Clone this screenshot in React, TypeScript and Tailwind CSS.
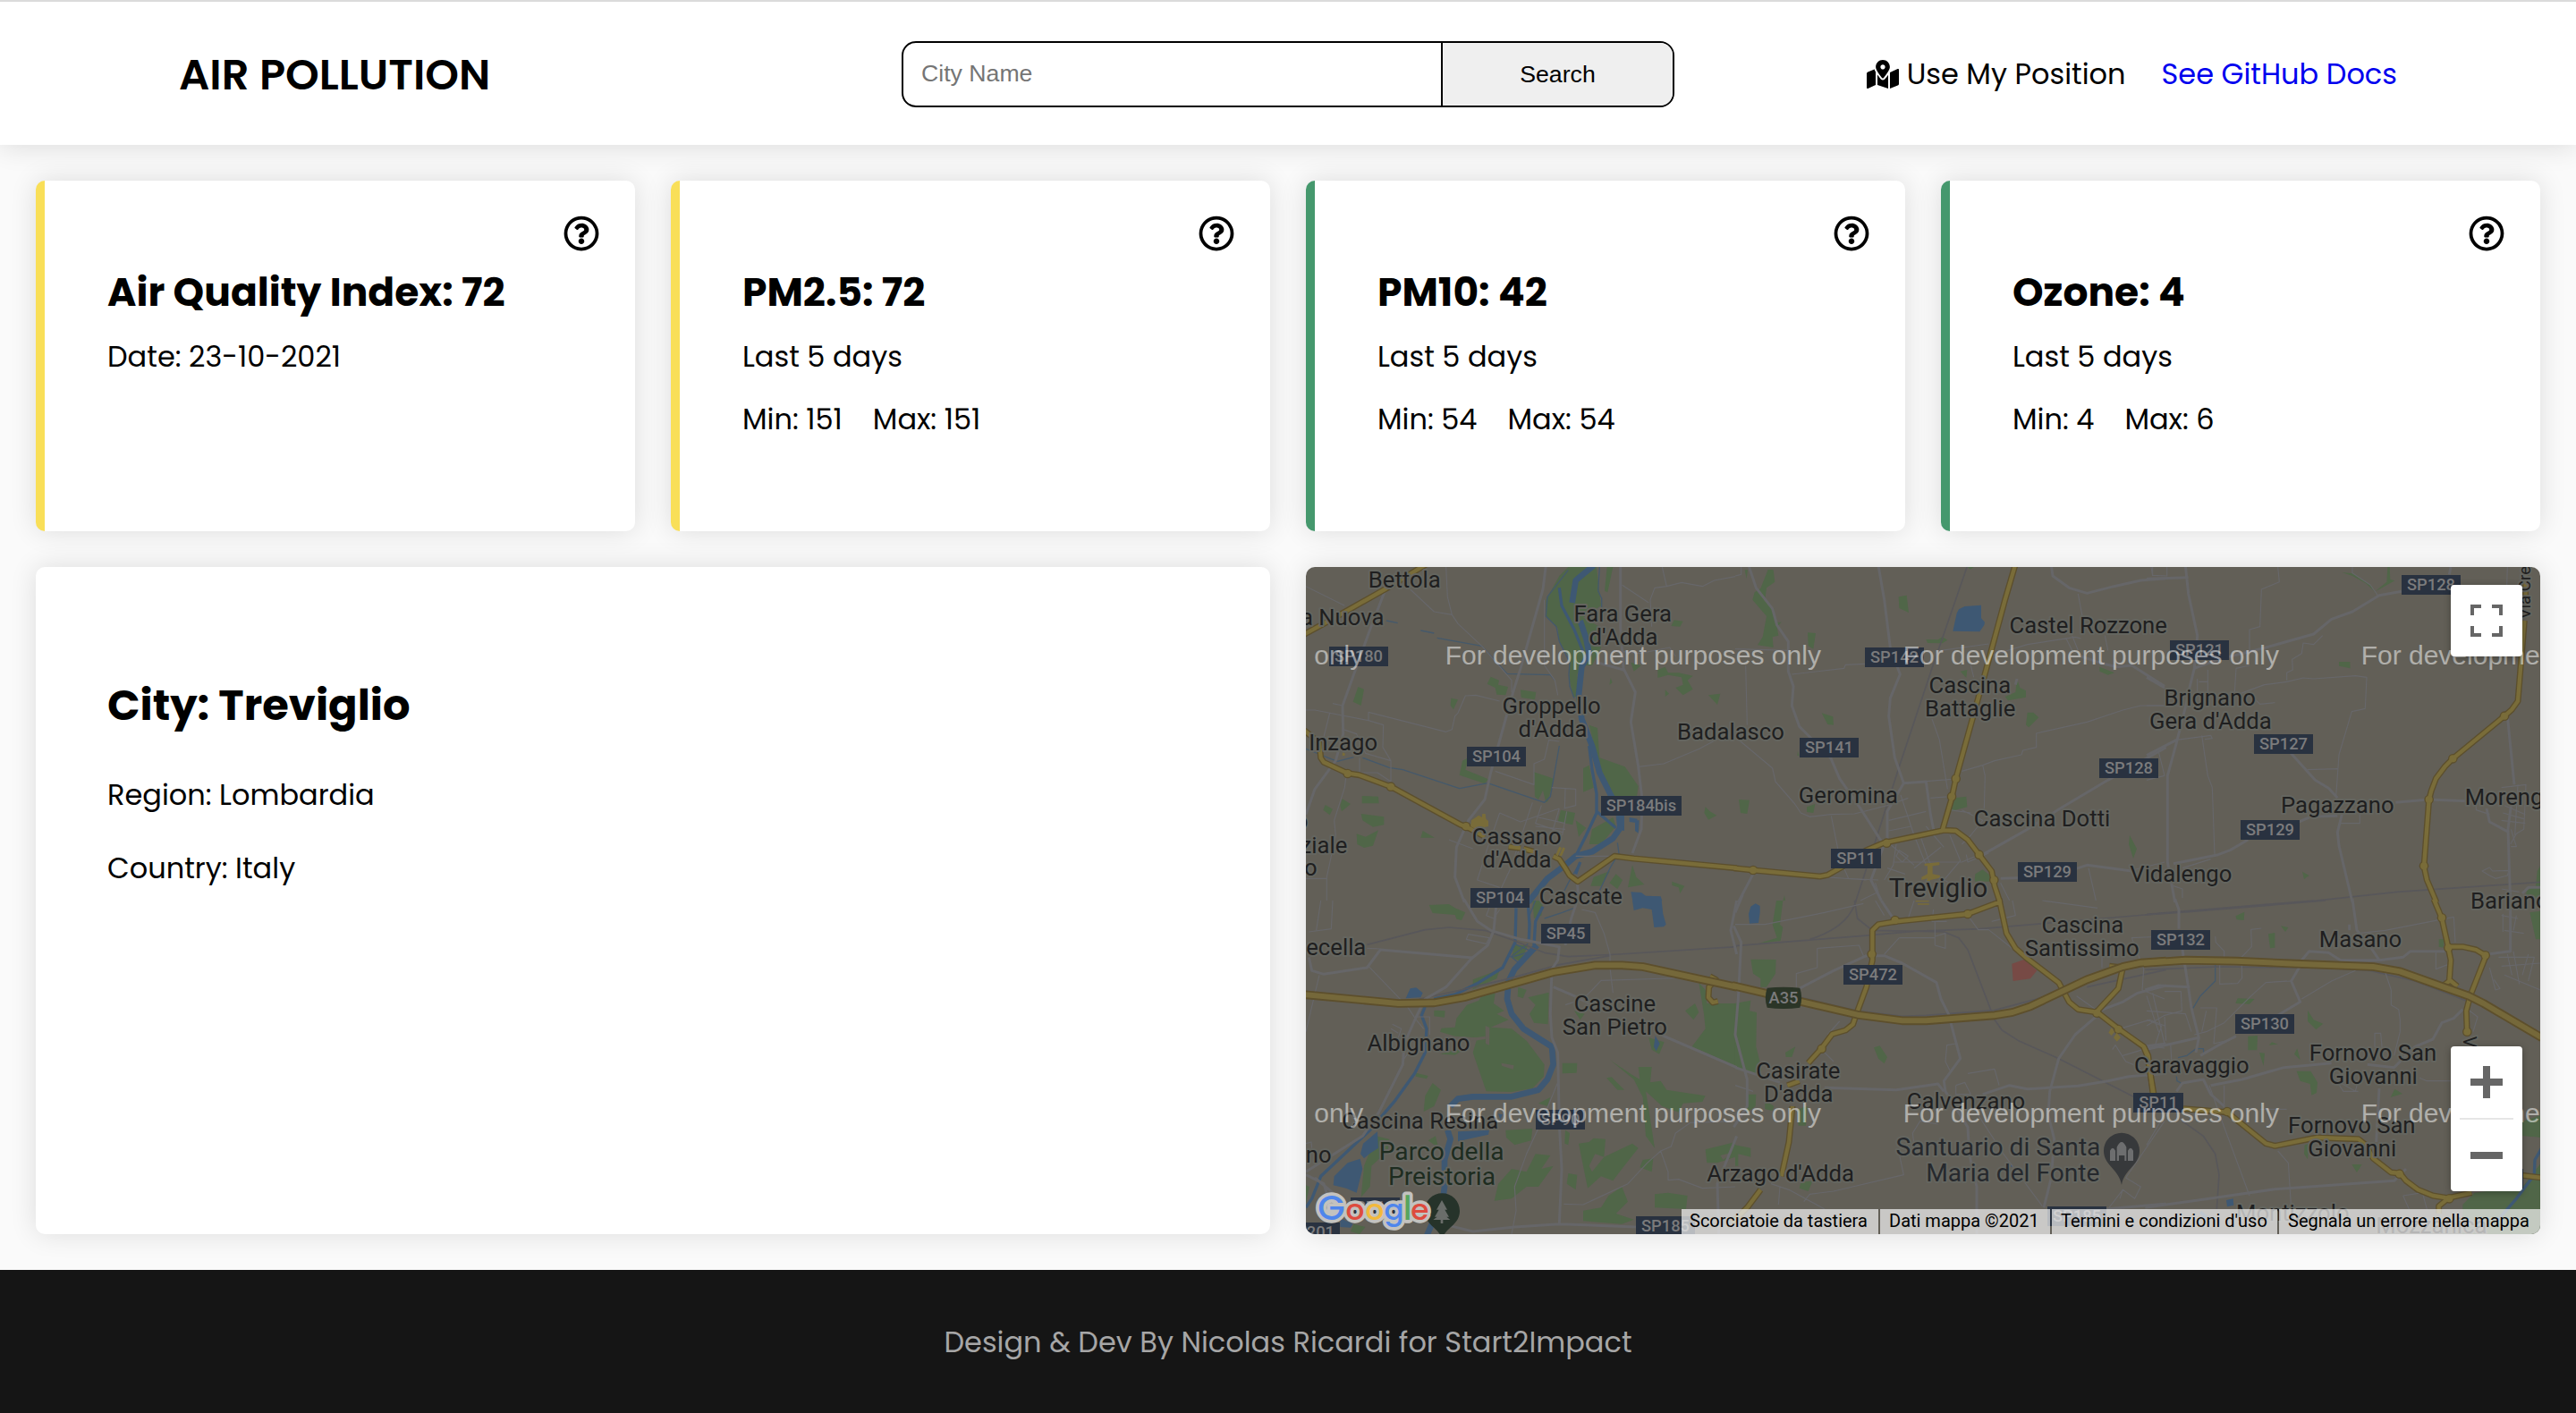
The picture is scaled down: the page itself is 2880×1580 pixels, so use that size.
import { FaRegQuestionCircle, FaMapMarkedAlt } from 'react-icons/fa';

/* ------------------------------------------------------------------ */
/* Map data: six tiles, each in its own local coordinates              */
/* ------------------------------------------------------------------ */

type Tile = {
  x: number;
  y: number;
  green: string;
  ground?: string;
  water: string;
  river?: string;
  stream: string;
  brook?: string;
  rail: string;
  street: string;
  road: string;
  primary: string;
  motorway?: string;
  amber?: string;
  nodes?: [number, number][];
};

const tiles: Tile[] = [
  {
    x: 0,
    y: 0,
    green:
      'M850,30L805,110L805,165L845,205L850,250L875,290L882,300L885,380L895,435L915,435L910,360L930,330L960,330L990,270L985,200L930,170L990,130L975,0L880,0ZM1010,0L1030,0L1012,85L1002,80ZM175,402L195,410L185,465L158,452ZM487,440L510,445L495,478L485,465ZM620,368L648,380L645,395L678,402L670,430L640,428L635,405L608,392ZM720,412L772,420L768,445L722,438ZM545,640L535,680L612,712L600,727L515,698L525,650ZM765,688L832,710L812,785L805,790L795,750L780,780L768,770ZM930,675L950,665L965,740L930,755ZM950,530L978,540L985,640L1070,670L1115,735L1110,770L1030,770L990,690ZM855,815L903,825L895,865L845,855ZM905,850L940,875L915,905ZM960,880L1030,840L1040,870L990,930L950,930ZM1095,1000L1108,1040L1135,1065L1080,1075ZM1040,1030L1062,1050L1045,1080L1018,1060ZM965,1040L1020,1020L990,1070L955,1070ZM1228,1055L1270,1070L1255,1095L1250,1075L1228,1068ZM1340,805L1355,820L1378,833L1350,848L1336,825ZM1205,335L1215,355L1250,355L1298,365L1280,380L1298,410L1265,430L1240,405L1265,395L1260,370L1215,362L1180,372L1180,345ZM1350,430L1390,425L1380,462ZM1235,178L1265,182L1255,200L1225,198ZM1090,320L1125,330L1100,350ZM188,768L243,770L245,793L188,793ZM185,828L262,838L262,865L225,872L190,850ZM170,895L200,905L243,883L225,935L195,942L172,930ZM392,885L432,908L385,908ZM122,778L150,795L120,820L115,800ZM65,798L90,812L80,832L58,815ZM1022,372L1028,388L1018,395ZM1205,412L1218,425L1205,435Z',
    water: 'M1085,840L1112,845L1108,858L1085,855ZM1104,850L1118,850L1115,893L1104,885ZM1090,1090L1125,1092L1140,1103L1190,1105L1195,1120L1096,1120ZM1040,835L1068,835L1068,885L1045,880Z',
    river: 'M965,-5L905,45L893,120M920,180L940,240L950,290L925,335L915,430L925,510L960,600L985,690L1020,760L1058,830L1058,870L1030,910L960,955L905,970L870,1000L810,1045L745,1125',
    stream: 'M850,70L858,130L900,210L930,285M950,600L960,680L975,760L975,825L940,900L905,970M975,820L1040,875M920,990L905,1030',
    brook:
      'M880,10L810,100L805,165L840,200L850,250L885,320L882,360L885,400L900,440M985,0L980,80L992,105L992,140M385,213L430,222M440,238L590,265L675,358L820,362L835,380M190,640L280,673L325,680L515,743L610,725L800,790L820,770L850,600M0,610L50,630L105,652L160,638M1045,925L1050,960L1020,1010L970,1119M920,990L880,1060L850,1119M270,180L308,188',
    rail: '',
    street:
      'M0,65L130,130M350,75L430,150L490,160L510,190L590,265L690,380L690,420M470,0L475,100L490,160M800,110L800,330L835,380L845,430M1195,0L1210,65L1260,52L1330,65L1370,45L1440,32M1210,65L1170,70L1155,110L1160,200M0,480L30,480L210,515L210,487L470,553L490,545L500,500L510,490L535,432L570,430L650,450M80,490L60,570M210,515L260,530L258,605L285,650L285,720M125,545L170,560L200,625L285,650M180,640L180,690L240,690L285,720M135,700L130,740L95,850L100,900L70,1040L70,1119M0,1045L70,1045M635,685L765,730L765,660L800,645L815,580L850,585M650,825L720,855L850,810M650,825L610,940L575,1050L650,1075M760,790L690,1000M790,800L770,860L860,890M850,810L820,910M720,940L640,1110M770,870L870,880M780,840L870,860M760,890L830,920M875,820L860,900M1115,670L1200,660L1320,610L1440,545M480,915L560,945M825,740L905,745L905,800L865,810M870,745L868,810M1060,60L1150,120M1030,280L1120,290L1220,270L1240,300M905,970L1040,970M90,458L123,465',
    road: 'M805,-5L795,75L720,340L695,420L620,690L600,780L545,850L505,940L500,1040L532,1125M265,80L215,210L150,390L123,465L125,560L100,650L30,745L0,830M1055,-5L1055,200L1065,340L1105,420L1090,520L1115,670L1128,780L1125,880L1095,960M975,320L1065,345M910,1055L915,1125',
    primary:
      'M405,-10L270,72L150,140L60,190L-10,228M-5,548L45,590L50,640L60,655L140,692L180,698L285,737L520,865L555,880L600,905M680,938L720,943M730,945L775,958M830,970L850,980L870,1010L885,1035L912,1055L1035,970L1100,978L1445,1010',
    amber: 'M555,850L580,833L590,840L592,828L602,828L604,845L612,852L612,870L570,880L552,870ZM850,938L858,942L845,970L838,965ZM862,940L870,944L858,970L850,968ZM123,622L132,626L130,634L122,632Z',
    nodes: [
      [285, 737],
      [140, 693],
      [537, 870],
    ],
  },
  {
    x: 1440,
    y: 0,
    green:
      'M110,8L128,10L133,50L105,70L100,110L130,140L135,185L155,185L140,200L145,230L125,235L128,270L75,262L92,235L105,165L58,110L65,85L85,72ZM32,10L42,10L38,40ZM548,100L575,95L582,153L550,138ZM243,220L270,222L262,275L245,265ZM640,243L680,244L695,234L712,245L695,256L645,255ZM290,490L328,502L330,530L310,528ZM945,375L955,405L975,415L975,437L915,448L905,435L940,420ZM980,488L1000,488L1018,505L985,538L975,530ZM12,780L48,782L40,828L18,825ZM240,805L268,795L262,825L240,822ZM735,775L775,770L778,805L722,820ZM1222,335L1272,355L1250,362L1222,350ZM1323,900L1347,945L1335,978L1320,930ZM803,1055L805,1030L830,1015L855,1035L853,1055ZM755,350L778,345L775,372ZM210,618L215,635L250,642L208,632ZM780,0L800,0L788,8ZM160,1119L165,1102L168,1119Z',
    water: 'M743,155L750,142L770,132L825,128L825,172L837,185L835,195L820,217L730,215Z',
    stream: '',
    rail: 'M778,-2L660,340L550,670L470,920L403,1125',
    street:
      'M0,275L180,280M190,360L365,340L370,328L435,325M35,330L40,530M0,570L125,675L135,720L200,795L220,825L250,838L320,830L400,828L510,800L580,775M660,510L685,580L712,745M565,725L725,712M760,685L830,665L870,650L960,630L965,615L1010,605L1010,558L1180,520L1300,480L1360,465L1440,465M830,665L838,700L835,810M690,280L850,258M1150,90L1165,170M322,835L345,950M555,765L600,900L640,1000M655,775L720,770M515,850L640,820M515,885L590,870M720,900L755,985L700,1050M620,900L655,1000L640,1060M520,930L600,1000M530,990L760,990L830,960M600,1010L690,940M360,1000L380,1045L480,1050M300,1040L440,1050M790,330L800,370M540,930L530,1000L500,1050M550,950L580,970L560,990L540,970ZM510,1010L570,1030M760,815L830,850L790,900L760,930M720,815L790,825M640,870L700,940M850,300L980,260L1140,235L1160,240M1110,240L1130,280M1130,230L1150,280M1240,230L1250,280M0,30L20,25L20,0M1400,30L1395,0M700,1050L760,1080M890,1060L920,1119M1185,1010L1210,1119M470,1060L480,1090L420,1119M1320,1020L1440,990M1390,712L1440,700M690,1060L720,1119M775,965L780,990L850,960',
    road: 'M45,-5L70,70L125,140L140,195L178,250L178,350L195,400L190,465L215,535L250,570L320,640L350,710L420,810L490,920M480,-5L500,110L520,270L553,360L520,440L515,500L535,640L565,725L640,720L655,830L665,880M565,725L510,820L510,920M1060,-5L1065,30L1120,70L1180,88L1270,65L1360,45L1445,38M830,965L980,880L1090,810L1250,715L1445,605M1440,400L1330,330L1280,335L1235,325L1160,300M60,1030L10,1125M890,1045L1060,1040L1180,1000L1330,1020M500,930L455,1050L490,1119M940,395L945,375',
    primary:
      'M-5,1010L60,1017L285,1038L310,1033L360,1005L440,950L500,925L620,900L700,883L740,885L780,915L860,1020L870,1070L888,1125M940,-10L905,110L840,350L790,530L740,710L725,780L695,883',
    amber:
      'M635,995L685,990L685,1000L662,1003L662,1030L688,1035L685,1043L655,1050L650,1060L640,1058L645,1045L625,1050L625,1040L645,1030L645,1003L635,1003ZM610,1055L625,1058L620,1065Z',
    nodes: [
      [60, 1017],
      [508, 926],
      [740, 710],
      [726, 770],
      [818, 965],
      [868, 1050],
    ],
  },
  {
    x: 2820,
    y: 0,
    green:
      'M655,18L692,22L750,60L775,92L735,55L690,30ZM808,0L815,0L817,42L832,46L780,75L768,80L805,50ZM645,318L682,318L683,340L645,332ZM522,1022L545,1035L528,1047ZM1322,1000L1322,1119L1270,1110L1275,1085L1305,1070L1310,1020Z',
    water: '',
    stream: '',
    rail: 'M555,1121L840,1090L1325,1057M0,1165L560,1119',
    street:
      'M440,0L445,50L385,75L380,200L345,210L345,280M590,230L560,260L525,255L520,290L488,310L490,345L470,355L470,380M300,430L340,415L395,395L470,385L525,372L560,375L700,365L738,370L733,475L688,485L645,630L635,770M540,680L640,677M205,345L205,440M175,385L205,385M295,420L300,340L345,330M185,565L205,700L220,740L228,965M690,0L690,20L750,60L775,95M650,860L715,860L715,830M0,465L110,465M100,580L215,565L220,575L195,578M1190,740L1272,730L1265,880L1240,895L1220,930M1200,800L1270,830M1190,850L1270,860M1195,825L1265,845M1245,730L1235,900M1125,1020L1150,1008L1160,1020L1215,1018L1210,1035L1170,1045L1150,1035ZM1210,0L1208,60M20,0L20,28L68,30L68,0M360,440L380,460L430,455M1105,800L1105,815L1150,830M1190,1080L1250,1090M1222,880L1240,938L1222,938M0,715L40,705M40,620L60,700M215,980L120,1010M90,1070L120,1080L120,1110M170,375L170,430M330,440L340,470',
    road: 'M130,-5L140,90L170,230L160,340L145,400L135,450L100,590L70,700L70,990L95,1125M0,40L140,35M240,310L400,270L560,225L620,175L690,150L780,95L855,82M160,340L240,310M1020,0L1015,25M480,620L565,715L610,742L640,775M835,790L945,780L1075,785M0,370L60,405M0,632L100,580M90,995L240,965L280,950L340,915M510,855L550,838L640,835M655,830L640,890L645,935L690,1125M1210,500L1220,600L1233,730M1140,810L1150,855L1215,890M1222,800L1212,880L1220,1125M1320,1075L1280,1075L1260,1095',
    primary: 'M1267,180L1245,450L1225,478L1200,500L1030,640L1000,670L970,710L955,750L947,780L930,1005L940,1050L972,1125M1272,-5L1270,110',
    nodes: [
      [1200, 500],
      [1027, 643],
      [947, 780],
      [930, 1003],
    ],
  },
  {
    x: 0,
    y: 1119,
    green:
      'M450,440L455,428L500,425L505,395L540,350L580,335L595,310L635,312L630,345L665,370L640,380L680,400L620,425L690,430L740,470L800,550L798,590L760,630L690,642L605,640L560,510L575,460L500,455ZM430,368L467,370L465,392L430,388ZM560,265L650,232L640,262L560,298ZM413,15L480,12L500,25L535,40L522,66L505,62L500,48L425,42ZM712,290L740,300L728,328L710,322ZM745,325L815,308L812,415L765,410L750,380L770,350ZM860,545L910,545L908,578L860,580ZM1318,275L1340,300L1345,345L1442,345L1442,555L1295,490L1340,430L1335,380ZM1272,370L1305,345L1318,375L1300,400ZM1008,595L1025,592L1068,635L1045,635ZM1020,535L1090,582L1120,600L1115,558L1160,558L1155,610L1190,605L1210,635L1340,655L1330,675L1265,680L1250,710L1195,690L1140,640L1150,700L1170,830L1140,790L1130,660L1100,600ZM425,612L453,635L430,690L395,708L400,655ZM370,578L410,588L405,598L368,590ZM195,890L235,790L280,800L275,840L220,890L215,960L185,995ZM670,770L760,765L755,805L700,820L672,795ZM915,815L950,810L965,797L1005,800L1000,860L1095,815L1115,830L1060,900L1030,940L990,925L945,965ZM770,850L820,855L790,900L830,890L780,960L740,960L690,1000L632,1007L645,950L690,900L740,910ZM880,915L910,920L905,970L875,950ZM930,1040L990,1030L1015,990L1060,960L1080,1010L1040,1050L1100,1070L1060,1085L930,1075ZM1170,985L1215,980L1280,990L1275,1035L1170,1030ZM1340,835L1440,810L1440,860L1380,880L1345,880ZM780,680L820,660L810,690ZM1130,870L1165,865L1160,910L1120,895ZM870,770L885,780L880,820L868,815ZM0,955L12,960L0,1015ZM1150,460L1202,475L1185,515L1160,500ZM450,515L545,490L500,518ZM700,150L745,150L720,205L690,190ZM760,0L795,0L790,50L765,60ZM410,805L435,790L445,830ZM160,1085L200,1095L180,1119L150,1110ZM900,370L935,380L920,400Z',
    ground: 'M655,545L698,553L695,566L658,555ZM602,420L616,426L615,485L603,480ZM550,462L602,455L602,465L555,472ZM970,850L1000,860L960,910L950,890ZM1390,855L1430,845L1400,870Z',
    water:
      'M335,328L350,295L370,292L392,310L385,325ZM240,775L243,830L215,848L195,865L183,850L192,815ZM182,866L190,900L170,980L135,965L92,955L95,925L140,880ZM510,775L615,770L612,785L510,808ZM1095,0L1193,0L1198,45L1208,80L1200,88L1168,90L1160,30L1130,25L1100,33ZM1172,453L1187,480L1175,505L1167,490ZM115,1065L158,1085L150,1097L115,1095ZM645,715L660,718L652,735Z',
    river: 'M775,150L700,230L680,270L675,330L690,380L730,430L825,490L830,550L810,600L780,635L690,658L560,658L510,665L485,690M475,770L485,800L465,870L465,960L460,1000L405,1125',
    stream: 'M705,25L702,140L660,225L580,275L500,315L430,330M745,10L750,80L748,130M795,20L770,70L765,150M400,355L388,385L405,430L400,510L365,580L300,670L215,770L50,925L20,1000L0,1030',
    brook: 'M700,145L755,170L690,190L715,210M685,190L745,145M800,60L860,40L900,25M750,0L745,30M770,0L750,50',
    rail: 'M205,148L400,98L480,90L600,100L700,135L800,175L880,188L1050,180L1445,155M380,330L520,300L680,262L850,215L1020,185',
    street:
      'M90,0L85,95L10,105M50,0L35,100M45,250L0,440M210,220L340,355L370,400L395,430M545,113L538,130L605,145L615,125ZM625,0L605,50L630,60L650,30M925,30L970,40L1000,110L1020,180L1020,225L1030,310M870,350L930,330L960,300L990,268L1310,258M845,610L800,720L740,850L700,960L705,1040L690,1119M865,1018L930,1020L1080,950L1145,880L1190,840L1225,825L1240,780L1290,745L1440,740M1190,840L1215,910L1215,938L1250,935L1330,965L1440,960M370,390L415,390L415,450M290,415L320,430L310,460M285,430L310,445M205,160L250,162M0,815L18,810L20,830M330,530L350,500',
    road: 'M530,-5L575,70L620,100L720,130L850,155L845,200L825,230L820,380L825,460L845,510L850,750L858,900L850,1085M640,0L630,100L610,150L555,195L470,290L400,330L370,390L330,480L325,550L245,710L190,790L0,910M10,190L20,235L60,247L205,225L250,165L560,192M830,290L900,320L1000,370M1190,450L1445,560M910,0L890,60L870,150M0,920L60,950L110,1119M480,1090L560,1110L700,1095L850,1085L1107,1095M1445,0L1425,100L1445,180M1445,790L1380,950L1385,1119M110,1119L90,980L30,930',
    primary: 'M1355,255L1375,265L1352,290L1350,325L1365,342L1382,338',
    motorway: 'M-10,315L310,345L430,343L530,325L830,240L970,217L1060,217L1130,222L1445,290',
  },
  {
    x: 1440,
    y: 1119,
    green:
      'M138,0L160,0L150,80L160,90L152,135L80,143L140,125L125,80ZM52,197L137,198L135,245L105,290L85,290L85,262L60,245ZM-2,345L52,335L48,370L72,375L70,490L90,570L60,580L-2,560ZM168,510L202,490L190,525L170,525ZM465,493L485,487L510,525L500,547L480,530ZM35,630L45,650L70,650L68,690L40,710ZM100,670L130,690L125,705L100,700ZM210,700L242,690L237,755L212,755ZM0,820L52,830L52,860L10,850L10,890L0,890ZM220,945L260,940L245,975L215,965Z',
    water: 'M52,20L68,10L83,18L83,40L78,75L48,77L45,45ZM923,885L933,890L925,895Z',
    stream: '',
    rail: 'M0,152L240,133L430,118L600,103L820,95L1445,42M250,130Q380,90 405,0M400,0L410,60L460,100L700,105L750,125L780,165L870,400L895,435L950,470L1085,530L1340,660M60,290L220,325L410,370L560,388L640,385L870,368L1050,320M1180,290L1445,232',
    street:
      'M0,80L100,80L300,40L430,10M275,160L415,150L430,185M275,160L275,225L205,245L205,290M670,70L670,150L705,160L705,110L670,120M550,125L670,125M550,125L500,180M780,50L815,98L850,98L935,165M740,480L710,485L705,540L720,570M780,580L870,565L885,620M740,620L770,610L790,650M740,620L740,650L790,650M680,750L620,740L595,780L600,820M815,720L900,850L1030,1025M550,850L565,920L330,975L250,985L230,1010M120,950L180,970L300,1035M150,960L145,1020M1440,740L1310,930L1360,960L1340,1000L1300,970L1250,1035M1300,970L1290,1000M1290,430L1390,400L1440,420M1300,520L1400,490L1440,495M1265,500L1275,485L1310,540L1360,560M1370,230L1365,300L1440,330M1145,320L1215,370M350,405L310,450M1440,120L1330,125L1370,230M1230,170L1230,225M930,0L940,50L860,70M290,500L330,540M1030,0L1215,25M665,30L660,70L710,70M470,0L500,50M580,60L600,0M0,620L60,640',
    road: 'M-5,85L20,140L10,330L0,450L40,600L40,690L-5,760M215,295L330,235L440,185L500,185L560,210L675,275L690,330L715,380L755,530L700,605L705,640L780,760L785,850L810,960L810,1119M300,628L540,635L680,615L700,640M830,650L920,620L980,632L1150,622L1250,605L1320,590L1445,580M1215,385L1140,450L1085,530L1055,640L1050,720L1070,800L1060,930L1035,1030M1220,370L1300,340L1350,310L1445,285M490,0L530,60M1240,1035L1440,1018L1445,1018M0,560L150,610M0,40L25,-20M1370,490L1445,480',
    primary:
      'M885,-5L910,110L940,160L980,195L1085,275L1120,340L1150,365L1215,375L1285,430L1370,490L1382,520L1405,655M885,5L780,45L540,70L480,80L460,100L460,200L440,290L405,385L395,415L370,435L325,448L290,495L245,545M215,605L175,620M192,690L180,810L155,925M85,970L40,1030L-10,1080M1255,220L1300,225L1285,295L1215,370',
    amber: 'M1262,426L1272,440L1262,453L1252,443ZM1280,443L1293,460L1280,473L1269,460ZM605,0L650,0L650,4L605,4ZM612,10L650,10L650,14L612,14Z',
    motorway: 'M-10,285L410,383L560,403L640,403L870,385L930,375L990,355L1180,265L1300,222L1360,209L1445,203',
    nodes: [
      [536, 66],
      [780, 45],
      [458, 180],
      [1213, 377],
      [290, 497],
      [1285, 432],
    ],
  },
  {
    x: 2820,
    y: 1119,
    green:
      'M298,52L328,38L326,66L302,64ZM408,112L430,108L430,158L414,160ZM450,85L475,90L465,105ZM305,328L362,330L345,347L298,345ZM340,455L372,453L370,502L340,502ZM378,510L396,512L392,555ZM540,368L560,400L592,413L568,433L540,405ZM495,515L505,496L515,535ZM503,572L550,572L573,610L570,645L553,653L548,615L515,605ZM832,632L858,648L818,660ZM688,885L722,885L705,912ZM980,130L998,130L995,158L980,155ZM1285,40L1322,35L1322,130L1305,130ZM1260,740L1322,720L1322,795L1260,790ZM1060,1020L1100,980L1260,960L1322,880L1322,1119L1060,1119ZM530,820L545,815L540,868L528,850ZM420,475L440,482L410,485Z',
    ground: 'M1260,790L1322,795L1322,880L1260,960Z',
    water: 'M267,1005L290,1000L292,1022L270,1027Z',
    stream: 'M1325,830L1302,870L1300,920L1240,1000L1170,1080M180,1045L205,1065',
    brook: 'M230,215L230,270L180,320L155,362M105,527L135,520L165,497L190,497L192,518M100,590L102,605L115,612',
    rail: 'M-5,48L140,38L600,0M-5,232L240,222L600,226L750,235L900,270L1070,335M120,740L190,790L230,850L243,920L235,1035',
    street:
      'M230,120L232,140L260,170L260,190M385,93L350,97L352,155L318,190L320,260L305,278L245,280L245,215M485,270L400,275L350,320L260,410L200,440L160,450M520,330L620,270L700,235M800,240L820,300L820,350L845,365L850,400L850,440L830,520M765,445L785,445L790,500L765,490ZM915,595L940,605L1020,605M440,840L475,880L485,1035M210,620L260,760L345,990M60,305L115,305L118,370L60,385L0,420M0,370L130,380L150,440M60,390L65,470M20,310L60,480M80,480L85,560M180,360L235,360L225,480L270,470M200,370L185,440M30,480L50,420L0,400M0,320L40,440M1030,55L1035,140M1030,55L800,100L710,110M970,170L970,230L1010,215M860,990L925,980L940,1035M860,990L880,1035M1190,50L1245,60M1200,100L1265,110M1150,225L1170,300L1185,295L1165,265M1180,190L1300,190L1280,270M1190,220L1320,210M1200,250L1320,300M1230,170L1250,280M1210,180L1225,250M1280,180L1260,250M1195,45L1195,105M1240,50L1230,100M1070,360L1110,390L1095,440M470,270L400,275M260,620L260,720M630,600L700,640L710,600M660,560L640,610L660,640L710,640M0,820L70,700M380,700L470,700',
    road: 'M95,-5L108,30L108,95M120,165L135,260L150,360L175,460L165,510M690,-5L705,100L740,140L780,200L860,190L885,170L1000,170M520,200L545,170L610,175L650,200L780,200M-5,300L40,285L145,290M520,210L485,270L515,340L440,385M300,455L250,480L180,520M215,620L320,600L460,560L620,545M-5,500L175,460M100,640L120,612L190,600L215,650L260,690M740,550L830,560L900,490L960,465L990,410L1030,395L1060,365M780,630L770,810M-5,1030L210,1000L430,968L830,940L870,900M1145,180L1220,170L1220,-5M680,100L680,80',
    primary:
      'M963,-5L990,60L1010,150L1020,200L1015,270L995,285M1015,265L1042,288M1015,155L1060,155L1105,165L1138,185L1085,320L1072,370L1075,450M-10,490L5,520L22,655M123,698L270,710L400,815L430,823L570,795L710,800L735,820L760,865L820,912L850,915L870,940L910,970L960,990L1010,998L1090,980M1010,1000L980,1025L980,1050M1260,922L1325,930',
    motorway: 'M-10,210L130,200L300,203L500,212L760,222L850,238L1080,320L1130,345L1325,460',
    nodes: [
      [990, 58],
      [1012, 158],
      [1136, 184],
      [1075, 440],
      [270, 708],
      [848, 917],
      [1015, 1000],
    ],
  },
];

type Anchor = 'start' | 'middle' | 'end';
const places: [string, number, number, Anchor?][] = [
  ['Bettola', 331, 68],
  ['a Nuova', 262, 194, 'end'],
  ['Fara Gera', 1063, 182],
  ["d'Adda", 1065, 260],
  ['Groppello', 824, 491],
  ["d'Adda", 828, 569],
  ['Badalasco', 1425, 578],
  ['Inzago', 125, 614],
  ['Cassano', 707, 930],
  ["d'Adda", 708, 1007],
  ['o', 7, 878, 'end'],
  ['ziale', 139, 959, 'end'],
  ['o', 38, 1036, 'end'],
  ['Cascate', 922, 1132],
  ['Castel Rozzone', 2624, 222],
  ['Cascina', 2227, 422],
  ['Battaglie', 2228, 501],
  ['Geromina', 1819, 792],
  ['Cascina Dotti', 2469, 869],
  ['Brignano', 3032, 465],
  ["Gera d'Adda", 3034, 542],
  ['Pagazzano', 3460, 824],
  ['Morengo', 3887, 798, 'start'],
  ['Vidalengo', 2935, 1056],
  ['Bariano', 3906, 1147, 'start'],
  ['ecella', 202, 1301, 'end'],
  ['Albignano', 378, 1622],
  ['Cascine', 1036, 1492],
  ['San Pietro', 1036, 1568],
  ['Cascina Resina', 383, 1884],
  ['no', 86, 1997, 'end'],
  ["Arzago d'Adda", 1592, 2062],
  ['Cascina', 2605, 1226],
  ['Santissimo', 2603, 1304],
  ['Casirate', 1651, 1716],
  ["D'adda", 1652, 1794],
  ['Calvenzano', 2214, 1818],
  ['Caravaggio', 2971, 1697],
  ['Masano', 3537, 1276],
  ['Fornovo San', 3579, 1656],
  ['Giovanni', 3580, 1734],
  ['Fornovo San', 3508, 1898],
  ['Giovanni', 3509, 1976],
  ['Montizzolo', 3310, 2194],
  ['Mozzanica', 3775, 2234],
];

const badges: [string, number, number, number][] = [
  ['SP180', 78, 267, 198],
  ['SP104', 540, 603, 198],
  ['SP184bis', 990, 768, 270],
  ['SP104', 552, 1077, 198],
  ['SP142', 1875, 270, 198],
  ['SP141', 1656, 573, 198],
  ['SP128', 2661, 642, 198],
  ['SP11', 1761, 945, 168],
  ['SP129', 2388, 990, 198],
  ['SP128', 3675, 27, 198],
  ['SP121', 2898, 246, 198],
  ['SP127', 3180, 561, 198],
  ['SP129', 3135, 849, 198],
  ['SP45', 789, 1197, 165],
  ['SP90', 771, 1821, 165],
  ['SP11', 150, 2115, 165],
  ['SP185', 1107, 2178, 198],
  ['SP201', -84, 2199, 198],
  ['SP472', 1803, 1335, 198],
  ['SP11', 2775, 1764, 168],
  ['SP185', 2487, 2145, 198],
  ['SP132', 2835, 1218, 198],
  ['SP130', 3117, 1500, 198],
  ['SP11', 3915, 2019, 168],
];

const watermarkX = [-1068, 467, 2003, 3539];
const watermarkY = [326, 1862];

function Lines({ pick, color, width }: { pick: (t: Tile) => string | undefined; color: string; width: number }) {
  return (
    <g fill="none" stroke={color} strokeWidth={width} strokeLinejoin="round">
      {tiles.map((t, i) => {
        const d = pick(t);
        return d ? <path key={i} d={d} transform={`translate(${t.x} ${t.y})`} /> : null;
      })}
    </g>
  );
}

function Areas({ pick, color }: { pick: (t: Tile) => string | undefined; color: string }) {
  return (
    <g fill={color}>
      {tiles.map((t, i) => {
        const d = pick(t);
        return d ? <path key={i} d={d} transform={`translate(${t.x} ${t.y})`} /> : null;
      })}
    </g>
  );
}

function Nodes({ r, color }: { r: number; color: string }) {
  return (
    <g fill={color}>
      {tiles.flatMap((t) => (t.nodes ?? []).map(([x, y]) => <circle key={`${t.x + x}-${t.y + y}`} cx={t.x + x} cy={t.y + y} r={r} />))}
    </g>
  );
}

const halo = { stroke: '#64655f', strokeWidth: 12, paintOrder: 'stroke', strokeLinejoin: 'round' } as const;

function MapDrawing() {
  return (
    <svg viewBox="0 0 4140 2238" className="block h-[746px] w-[1380px]" fontFamily="Roboto, sans-serif">
      <rect width="4140" height="2238" fill="#625f57" />
      <Areas pick={(t) => t.green} color="#506648" />
      <Areas pick={(t) => t.ground} color="#625f57" />
      <path d="M2368,1331L2410,1316L2452,1354L2430,1381L2372,1389Z" fill="#774a45" />
      <Areas pick={(t) => t.water} color="#3e5873" />
      <Lines pick={(t) => t.brook} color="#45596b" width={4} />
      <Lines pick={(t) => t.stream} color="#3e5873" width={10} />
      <Lines pick={(t) => t.river} color="#3e5873" width={20} />
      <Lines pick={(t) => t.rail} color="#58575a" width={5} />
      <Lines pick={(t) => t.street} color="#67676a" width={3.5} />
      <Lines pick={(t) => t.road} color="#666668" width={9} />
      <Lines pick={(t) => t.primary} color="#5c4f2d" width={21} />
      <Nodes r={16} color="#5c4f2d" />
      <Lines pick={(t) => t.primary} color="#796c39" width={13} />
      <Nodes r={12} color="#796c39" />
      <Lines pick={(t) => t.motorway} color="#5d4f2c" width={29} />
      <Lines pick={(t) => t.motorway} color="#75683a" width={18} />
      <Areas pick={(t) => t.amber} color="#796c39" />

      {/* road shields */}
      <g fontSize="55" fontWeight="500" textAnchor="middle" fill="#7b7b7c">
        {badges.map(([name, x, y, w]) => (
          <g key={`${name}-${x}-${y}`}>
            <rect x={x} y={y} width={w} height="66" fill="#293240" />
            <text x={x + w / 2} y={y + 52}>
              {name}
            </text>
          </g>
        ))}
        <path d="M1547,1412Q1602,1406 1657,1412Q1668,1445 1657,1478Q1602,1486 1547,1478Q1536,1445 1547,1412Z" fill="#2b3527" />
        <text x="1602" y="1465">
          A35
        </text>
      </g>

      {/* place names */}
      <g fontSize="77" fill="#1f1f20" {...halo}>
        {places.map(([name, x, y, anchor]) => (
          <text key={`${name}-${x}-${y}`} x={x} y={y} textAnchor={anchor ?? 'middle'}>
            {name}
          </text>
        ))}
        <text x="2121" y="1106" fontSize="88" textAnchor="middle">
          Treviglio
        </text>
        <text fontSize="56" transform="translate(4107 175) rotate(-90)">
          Via Cremasca
        </text>
        <text fontSize="60" transform="translate(3882 1574) rotate(90)">
          Via
        </text>
      </g>
      <g fontSize="84.5" textAnchor="middle" fill="#1e2c20" {...halo}>
        <text x="455" y="1990">
          Parco della
        </text>
        <text x="456" y="2074">
          Preistoria
        </text>
      </g>
      <g fontSize="84.5" textAnchor="middle" fill="#26292d" {...halo}>
        <text x="2322" y="1975">
          Santuario di Santa
        </text>
        <text x="2371" y="2060">
          Maria del Fonte
        </text>
      </g>

      {/* park pin */}
      <path d="M457,2256C448,2216 398,2208 398,2160A59,59 0 0 1 516,2160C516,2208 466,2216 457,2256Z" fill="#26332a" />
      <path d="M456,2124L474,2156H466L480,2180H472L484,2190H460V2202H452V2190H427L440,2180H432L446,2156H438Z" fill="#6a6d6a" />
      {/* sanctuary pin */}
      <path d="M2736,2073C2728,2020 2676,2008 2676,1958A60,60 0 0 1 2796,1958C2796,2008 2744,2020 2736,2073Z" fill="#37393b" />
      <path
        d="M2697,1992V1958Q2706,1940 2715,1958V1992ZM2757,1992V1958Q2766,1940 2775,1958V1992ZM2720,1992V1946Q2736,1912 2752,1946V1992H2746V1974H2727V1992Z"
        fill="#6d6e6f"
      />

      {/* watermark */}
      <g fontFamily="Liberation Sans, Arial, sans-serif" fontSize="90" fill="#ffffff" fillOpacity="0.5">
        {watermarkY.flatMap((y) =>
          watermarkX.map((x) => (
            <text key={`${x}-${y}`} x={x} y={y}>
              For development purposes only
            </text>
          )),
        )}
      </g>

      {/* provider logo */}
      <g
        fontFamily="Poppins, Inter, sans-serif"
        fontSize="98"
        fontWeight="500"
        textAnchor="middle"
        stroke="#c3c2bf"
        strokeWidth="22"
        strokeLinejoin="round"
        paintOrder="stroke"
      >
        <g fill="none">
          <text x="85" y="2189" fontSize="118">G</text>
          <text x="165" y="2189">o</text>
          <text x="231" y="2189">o</text>
          <text x="296" y="2189">g</text>
          <text x="341" y="2189" fontSize="112">l</text>
          <text x="382" y="2189">e</text>
        </g>
        <g stroke="none">
          <text x="85" y="2189" fontSize="118" fill="#4f86ec">G</text>
          <text x="165" y="2189" fill="#dd4b3e">o</text>
          <text x="231" y="2189" fill="#f2b93b">o</text>
          <text x="296" y="2189" fill="#4f86ec">g</text>
          <text x="341" y="2189" fontSize="112" fill="#58a55c">l</text>
          <text x="382" y="2189" fill="#dd4b3e">e</text>
        </g>
      </g>
    </svg>
  );
}

function MapPanel() {
  return (
    <section className="relative overflow-hidden rounded-[10px]">
      <MapDrawing />

      <button className="absolute top-5 right-5 flex size-20 items-center justify-center rounded-[4px] bg-white shadow-[0_2px_8px_rgba(0,0,0,0.3)]">
        <svg viewBox="0 0 18 18" className="size-9" fill="#666666">
          <path d="M0 0v6h2V2h4V0H0zM16 0h-4v2h4v4h2V0h-2zM16 16h-4v2h6v-6h-2v4zM2 12H0v6h6v-2H2v-4z" />
        </svg>
      </button>

      <div className="absolute top-[536px] right-5 flex h-[162px] w-20 flex-col rounded-[4px] bg-white shadow-[0_2px_8px_rgba(0,0,0,0.3)]">
        <button className="flex h-20 items-center justify-center">
          <svg viewBox="0 0 18 18" className="size-9" fill="#666666">
            <path d="M18 7h-7V0H7v7H0v4h7v7h4v-7h7z" />
          </svg>
        </button>
        <div className="mx-2.5 h-0.5 bg-[#e6e6e6]" />
        <button className="flex h-20 items-center justify-center">
          <svg viewBox="0 0 18 18" className="size-9" fill="#666666">
            <path d="M0 7h18v4H0z" />
          </svg>
        </button>
      </div>

      <div className="absolute right-0 bottom-0 flex h-7 gap-0.5 font-['Roboto',sans-serif] text-[20px] leading-[27px] whitespace-nowrap text-black">
        <span className="w-[220px] bg-[#f5f5f5]/70 pl-[9px]">Scorciatoie da tastiera</span>
        <span className="w-[190px] bg-[#f5f5f5]/70 pl-2.5">Dati mappa ©2021</span>
        <span className="w-[252px] bg-[#f5f5f5]/70 pl-2.5">Termini e condizioni d'uso</span>
        <span className="w-[292px] bg-[#f5f5f5]/70 pl-2.5">Segnala un errore nella mappa</span>
      </div>
    </section>
  );
}

/* ------------------------------------------------------------------ */
/* Cards                                                               */
/* ------------------------------------------------------------------ */

type Metric = { title: string; note: string; min?: number; max?: number; good?: boolean };

const metrics: Metric[] = [
  { title: 'Air Quality Index: 72', note: 'Date: 23-10-2021' },
  { title: 'PM2.5: 72', note: 'Last 5 days', min: 151, max: 151 },
  { title: 'PM10: 42', note: 'Last 5 days', min: 54, max: 54, good: true },
  { title: 'Ozone: 4', note: 'Last 5 days', min: 4, max: 6, good: true },
];

function MetricCard({ title, note, min, max, good }: Metric) {
  return (
    <article
      className={`flex h-[392px] flex-col rounded-[10px] border-l-[10px] bg-white pt-[39px] pl-[70px] shadow-[0_0_30px_rgba(0,0,0,0.12)] ${
        good ? 'border-[#45986d]' : 'border-[#f9df58]'
      }`}
    >
      <FaRegQuestionCircle className="mr-10 size-10 self-end" />
      <h2 className="mt-[13px] text-[44px] leading-[66px] font-bold">{title}</h2>
      <p className="mt-[15px] leading-[48px]">{note}</p>
      {min !== undefined && (
        <div className="mt-[22px] flex gap-[34px] leading-[48px]">
          <span>Min: {min}</span>
          <span>Max: {max}</span>
        </div>
      )}
    </article>
  );
}

export default function App() {
  return (
    <div className="h-[1580px] w-[2880px] bg-[#fafafa] font-['Poppins','Inter',sans-serif] text-[32px] text-black">
      <header className="relative z-10 grid h-[162px] grid-cols-[808px_864px_808px] items-center border-t-2 border-[#dbdbdb] bg-white px-[200px] pt-0.5 shadow-[0_0_30px_rgba(0,0,0,0.14)]">
        <h1 className="pt-px text-[48px] leading-[72px] font-semibold">AIR POLLUTION</h1>
        <form className="flex h-[74px] overflow-hidden rounded-[16px] border-2 border-black font-['Liberation_Sans',Arial,sans-serif] text-[26.67px]">
          <input
            type="text"
            placeholder="City Name"
            className="w-[603px] border-r-2 border-black px-5 outline-none placeholder:text-[#757575]"
          />
          <button type="button" className="flex-1 bg-[#efefef]">
            Search
          </button>
        </form>
        <nav className="flex items-center justify-end gap-10 leading-[48px]">
          <span className="flex items-center gap-[9px]">
            <FaMapMarkedAlt className="h-8 w-9" />
            Use My Position
          </span>
          <a className="text-[#0000ee]">See GitHub Docs</a>
        </nav>
      </header>

      <main className="grid grid-cols-4 gap-10 p-10">
        {metrics.map((m) => (
          <MetricCard key={m.title} {...m} />
        ))}
        <section className="col-span-2 flex h-[746px] flex-col rounded-[10px] bg-white pt-[119px] pl-20 shadow-[0_0_30px_rgba(0,0,0,0.12)]">
          <h2 className="text-[48px] leading-[72px] font-bold">City: Treviglio</h2>
          <p className="mt-10 leading-[48px]">Region: Lombardia</p>
          <p className="mt-[34px] leading-[48px]">Country: Italy</p>
        </section>
        <div className="col-span-2 rounded-[10px] shadow-[0_0_30px_rgba(0,0,0,0.12)]">
          <MapPanel />
        </div>
      </main>

      <footer className="flex h-40 items-center justify-center bg-[#151515] pt-0.5 text-[#a6a6a6]">
        Design &amp; Dev By Nicolas Ricardi for Start2Impact
      </footer>
    </div>
  );
}
